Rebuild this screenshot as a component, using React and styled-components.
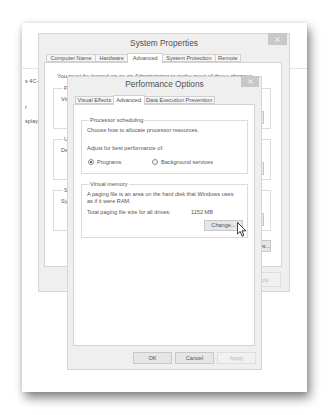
import React from "react";
import styled, { createGlobalStyle } from "styled-components";

const GlobalStyle = createGlobalStyle`
  html, body {
    margin: 0;
    padding: 0;
    background: #fff;
  }
  body {
    font-family: "Liberation Sans", Arial, sans-serif;
    color: #555;
  }
`;

const Desktop = styled.div`
  position: relative;
  width: 330px;
  height: 415px;
  overflow: hidden;
  background: #fff;
`;

// the control panel page behind the dialogs
const Backdrop = styled.div`
  position: absolute;
  left: 22px;
  top: 23px;
  width: 285px;
  height: 369px;
  background: #fff;
  box-shadow: 3px 6px 10px rgba(0, 0, 0, 0.48), 0 0 4px rgba(0, 0, 0, 0.12);
  display: flex;
  flex-direction: column;
`;

const BackdropHeader = styled.div`
  height: 45px;
  border-bottom: 1px solid #e4e4e4;
`;

const BackdropBody = styled.div`
  display: flex;
  flex-direction: column;
  padding: 9px 0 0 3px;
  font-size: 5.6px;
  line-height: 7px;
  color: #555;
`;

const BackdropLine = styled.div`
  margin-top: ${(p) => p.$gap || 0}px;
  white-space: nowrap;
`;

const Window = styled.div`
  position: absolute;
  left: ${(p) => p.$x}px;
  top: ${(p) => p.$y}px;
  width: ${(p) => p.$w}px;
  height: ${(p) => p.$h}px;
  box-sizing: border-box;
  background: #efefef;
  border: 1px solid #d5d5d5;
  display: flex;
  flex-direction: column;
`;

const TitleBar = styled.div`
  position: relative;
  height: ${(p) => p.$h}px;
  flex-shrink: 0;
  box-sizing: border-box;
  padding-top: ${(p) => p.$pad}px;
  text-align: center;
  font-size: 8.3px;
  line-height: 8px;
  color: #505050;
`;

const CloseButton = styled.div`
  position: absolute;
  top: -1px;
  right: 2px;
  width: ${(p) => p.$w}px;
  height: ${(p) => p.$h}px;
  background: #c8c8c8;
  display: flex;
  align-items: center;
  justify-content: center;
`;

const TabRow = styled.div`
  display: flex;
  align-items: flex-end;
  height: 9px;
  padding-left: 3px;
  margin: 0 ${(p) => p.$right}px 0 ${(p) => p.$left}px;
  position: relative;
  z-index: 1;
`;

const Tab = styled.div`
  box-sizing: border-box;
  height: ${(p) => (p.$active ? 10 : 8)}px;
  margin-bottom: ${(p) => (p.$active ? -1 : 0)}px;
  padding: ${(p) => (p.$active ? 1 : 0)}px ${(p) => p.$pad}px 0;
  margin-left: -1px;
  border: 1px solid #d0d0d0;
  border-bottom: ${(p) => (p.$active ? "none" : "1px solid #d0d0d0")};
  background: ${(p) => (p.$active ? "#fff" : "#f6f6f6")};
  font-size: 5.6px;
  line-height: 6px;
  color: #505050;
  white-space: nowrap;
`;

const Panel = styled.div`
  flex: 1;
  margin: 0 ${(p) => p.$right}px 0 ${(p) => p.$left}px;
  background: #fff;
  border: 1px solid #d3d3d3;
  display: flex;
  flex-direction: column;
  overflow: hidden;
`;

const ButtonRow = styled.div`
  height: ${(p) => p.$h}px;
  flex-shrink: 0;
  box-sizing: border-box;
  display: flex;
  justify-content: flex-end;
  align-items: flex-start;
  gap: 3px;
  padding: ${(p) => p.$top}px ${(p) => p.$right}px 0 0;
`;

const Button = styled.div`
  box-sizing: border-box;
  width: ${(p) => p.$w || 39}px;
  height: ${(p) => p.$h}px;
  margin-right: ${(p) => p.$mr || 0}px;
  background: ${(p) => (p.$disabled ? "#f1f1f1" : "#e6e6e6")};
  border: 1px solid ${(p) => (p.$disabled ? "#dedede" : "#c8c8c8")};
  color: ${(p) => (p.$disabled ? "#b9b9b9" : "#505050")};
  font-size: 5.6px;
  display: flex;
  align-items: center;
  justify-content: center;
  white-space: nowrap;
  flex-shrink: 0;
`;

const Text = styled.div`
  font-size: ${(p) => p.$size || 5.6}px;
  line-height: 7px;
  color: #555;
  white-space: nowrap;
  padding-left: ${(p) => p.$indent || 0}px;
  margin-top: ${(p) => p.$gap || 0}px;
`;

const Group = styled.fieldset`
  margin: ${(p) => p.$gap}px ${(p) => p.$right}px 0 ${(p) => p.$left}px;
  padding: ${(p) => p.$pad};
  border: 1px solid #dcdcdc;
  min-width: 0;
  display: flex;
  flex-direction: column;
`;

const Legend = styled.legend`
  font-size: 5.6px;
  line-height: 7px;
  color: #555;
  padding: 0 1px;
  margin-left: ${(p) => p.$offset}px;
`;

const ButtonLine = styled.div`
  display: flex;
  justify-content: flex-end;
  margin-top: ${(p) => p.$gap}px;
`;

const RadioRow = styled.div`
  display: flex;
  align-items: center;
  margin-top: 6px;
  height: 7px;
  padding-left: 1px;
`;

const RadioOption = styled.label`
  display: flex;
  align-items: center;
  gap: 3px;
  width: ${(p) => p.$w || "auto"};
  font-size: 5.6px;
  color: #555;
  white-space: nowrap;
`;

const RadioDot = styled.span`
  box-sizing: border-box;
  width: 6px;
  height: 6px;
  border-radius: 50%;
  border: 1px solid #8a8a8a;
  background: #fff;
  display: flex;
  align-items: center;
  justify-content: center;
  &::after {
    content: "";
    width: 2px;
    height: 2px;
    border-radius: 50%;
    background: ${(p) => (p.$checked ? "#333" : "transparent")};
  }
`;

const SizeRow = styled.div`
  display: flex;
  margin-top: 3.5px;
  font-size: 5.6px;
  line-height: 7px;
  color: #555;
  white-space: nowrap;
`;

const SizeLabel = styled.span`
  width: 104px;
`;

const Pointer = styled.svg`
  position: absolute;
  left: 237px;
  top: 222px;
`;

function Close({ w, h }) {
  return (
    <CloseButton $w={w} $h={h}>
      <svg width="5" height="5" viewBox="0 0 5 5">
        <path d="M0.5 0.5 L4.5 4.5 M4.5 0.5 L0.5 4.5" stroke="#fff" strokeWidth="1" />
      </svg>
    </CloseButton>
  );
}

function SystemProperties() {
  return (
    <Window $x={38} $y={33} $w={252} $h={259}>
      <TitleBar $h={19} $pad={5}>
        System Properties
        <Close w={19} h={12} />
      </TitleBar>
      <TabRow $left={5} $right={7}>
        <Tab $pad={3.5}>Computer Name</Tab>
        <Tab $pad={3.5}>Hardware</Tab>
        <Tab $pad={4.5} $active>Advanced</Tab>
        <Tab $pad={3}>System Protection</Tab>
        <Tab $pad={2.5}>Remote</Tab>
      </TabRow>
      <Panel $left={5} $right={7}>
        <Text $indent={12} $gap={10} $size={5.9}>
          You must be logged on as an Administrator to make most of these changes.
        </Text>
        <Group $gap={5} $left={8} $right={10} $pad="4px 6px 4px 7px">
          <Legend $offset={2}>Performance</Legend>
          <Text>Visual</Text>
          <ButtonLine $gap={7.5}>
            <Button $w={40} $h={13}>Settings...</Button>
          </ButtonLine>
        </Group>
        <Group $gap={7.5} $left={8} $right={10} $pad="4px 6px 4px 7px">
          <Legend $offset={2}>User Profiles</Legend>
          <Text>Desktop</Text>
          <ButtonLine $gap={7.5}>
            <Button $w={40} $h={13}>Settings...</Button>
          </ButtonLine>
        </Group>
        <Group $gap={7.5} $left={8} $right={10} $pad="4px 6px 4px 7px">
          <Legend $offset={2}>Startup</Legend>
          <Text>System</Text>
          <ButtonLine $gap={7.5}>
            <Button $w={40} $h={13}>Settings...</Button>
          </ButtonLine>
        </Group>
        <ButtonLine $gap={9.5}>
          <Button $w={62} $h={12} $mr={10}>
            Environment Variables...
          </Button>
        </ButtonLine>
      </Panel>
      <ButtonRow $h={24} $top={5} $right={8}>
        <Button $h={15}>OK</Button>
        <Button $h={15}>Cancel</Button>
        <Button $h={15} $disabled>
          Apply
        </Button>
      </ButtonRow>
    </Window>
  );
}

function PerformanceOptions() {
  return (
    <Window $x={67} $y={76} $w={195} $h={294}>
      <TitleBar $h={18} $pad={3}>
        Performance Options
        <Close w={18} h={11} />
      </TitleBar>
      <TabRow $left={5} $right={6}>
        <Tab $pad={1.5}>Visual Effects</Tab>
        <Tab $pad={2.5} $active>Advanced</Tab>
        <Tab $pad={1.5}>Data Execution Prevention</Tab>
      </TabRow>
      <Panel $left={5} $right={6}>
        <Group $gap={12} $left={7} $right={6} $pad="3px 5px 8px 5px">
          <Legend $offset={2}>Processor scheduling</Legend>
          <Text>Choose how to allocate processor resources.</Text>
          <Text $gap={11}>Adjust for best performance of:</Text>
          <RadioRow>
            <RadioOption $w="64px">
              <RadioDot $checked />
              Programs
            </RadioOption>
            <RadioOption>
              <RadioDot />
              Background services
            </RadioOption>
          </RadioRow>
        </Group>
        <Group $gap={7} $left={7} $right={6} $pad="3px 4px 6px 5px">
          <Legend $offset={2}>Virtual memory</Legend>
          <Text>A paging file is an area on the hard disk that Windows uses</Text>
          <Text>as if it were RAM.</Text>
          <SizeRow>
            <SizeLabel>Total paging file size for all drives:</SizeLabel>
            <span>1152 MB</span>
          </SizeRow>
          <ButtonLine $gap={4}>
            <Button $h={11}>Change...</Button>
          </ButtonLine>
        </Group>
      </Panel>
      <ButtonRow $h={23} $top={6} $right={5}>
        <Button $h={12}>OK</Button>
        <Button $h={12}>Cancel</Button>
        <Button $h={12} $disabled>
          Apply
        </Button>
      </ButtonRow>
    </Window>
  );
}

export default function App() {
  return (
    <>
      <GlobalStyle />
      <Desktop>
        <Backdrop>
          <BackdropHeader />
          <BackdropBody>
            <BackdropLine>s 4C-</BackdropLine>
            <BackdropLine $gap={19}>r</BackdropLine>
            <BackdropLine $gap={7}>splay</BackdropLine>
          </BackdropBody>
        </Backdrop>
        <SystemProperties />
        <PerformanceOptions />
        <Pointer width="10" height="15" viewBox="0 0 12 18">
          <path
            d="M0.5 0.5 L0.5 14.5 L3.8 11.4 L6.2 17 L8.2 16.1 L5.9 10.6 L10.5 10.6 Z"
            fill="#fff"
            stroke="#111"
            strokeWidth="1"
            strokeLinejoin="round"
          />
        </Pointer>
      </Desktop>
    </>
  );
}
